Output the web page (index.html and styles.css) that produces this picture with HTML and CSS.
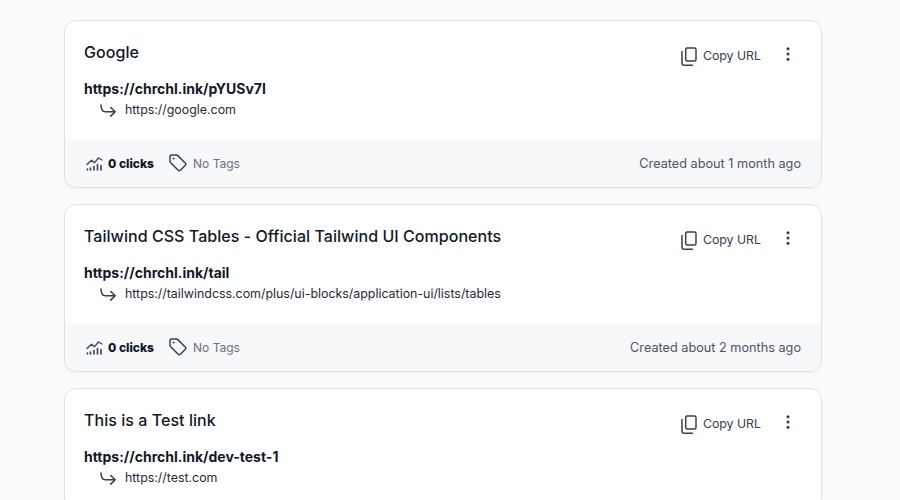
FILE: index.html
```html
<!DOCTYPE html>
<html lang="en">
<head>
  <meta charset="UTF-8" />
  <title>Links</title>
  <link rel="stylesheet" href="styles.css">
</head>
<body>
  <svg class="defs" width="0" height="0">
    <symbol id="copy" viewBox="0 0 16 19">
      <path d="M6.200 1h7.300A1.500 1.500 0 0 1 15 2.500v10a1.500 1.500 0 0 1-1.500 1.500H6.200a1.500 1.500 0 0 1-1.500-1.500v-10A1.500 1.500 0 0 1 6.200 1z" fill="none" stroke="currentColor" stroke-width="1.500"/>
      <path d="M1 4.500v11.700A2 2 0 0 0 3 18.200h8.500" fill="none" stroke="currentColor" stroke-width="1.500" stroke-linecap="round"/>
    </symbol>
    <symbol id="dots" viewBox="0 0 4 16">
      <circle cx="2" cy="2" r="1.800" fill="currentColor"/>
      <circle cx="2" cy="8" r="1.800" fill="currentColor"/>
      <circle cx="2" cy="14" r="1.800" fill="currentColor"/>
    </symbol>
    <symbol id="arrow" viewBox="0 0 16 13">
      <path d="M1 1c.2 4.500 1.500 6.800 4.500 6.800H15M10.800 3.500l4.300 4.300-4.300 4.300" fill="none" stroke="currentColor" stroke-width="1.600" stroke-linecap="round" stroke-linejoin="round"/>
    </symbol>
    <symbol id="chart" viewBox="0 0 17 15">
      <path d="M1 8.500l4.500-4.300 3 2.500L12.500 2l3.500 2" fill="none" stroke="currentColor" stroke-width="1.300" stroke-linecap="round" stroke-linejoin="round"/>
      <path d="M1.500 13v1M4.500 12v2M8 10.500V14M11.500 8.500V14M15 9.500V14" fill="none" stroke="currentColor" stroke-width="1.600" stroke-linecap="round"/>
    </symbol>
    <symbol id="tag" viewBox="0 0 18 18">
      <path d="M1 2.500A1.500 1.500 0 0 1 2.500 1h4.800c.6 0 1.100.2 1.500.6l7.600 7.600a1.500 1.500 0 0 1 0 2.100l-5 5a1.500 1.500 0 0 1-2.100 0L1.600 8.700A2 2 0 0 1 1 7.300z" fill="none" stroke="currentColor" stroke-width="1.500" stroke-linejoin="round"/>
      <circle cx="4.500" cy="4.500" r="1" fill="currentColor"/>
    </symbol>
  </svg>

  <div class="list">
    <div class="card">
      <div class="card-main">
        <div class="card-head">
          <h2>Google</h2>
          <div class="actions">
            <span class="copy"><svg class="ico-copy"><use href="#copy"/></svg>Copy URL</span>
            <svg class="ico-dots"><use href="#dots"/></svg>
          </div>
        </div>
        <div class="short">https://chrchl.ink/pYUSv7I</div>
        <div class="target"><svg class="ico-arrow"><use href="#arrow"/></svg>https://google.com</div>
      </div>
      <div class="card-foot">
        <span class="clicks"><svg class="ico-chart"><use href="#chart"/></svg>0 clicks</span>
        <span class="tags"><svg class="ico-tag"><use href="#tag"/></svg>No Tags</span>
        <span class="created">Created about 1 month ago</span>
      </div>
    </div>

    <div class="card">
      <div class="card-main">
        <div class="card-head">
          <h2>Tailwind CSS Tables - Official Tailwind UI Components</h2>
          <div class="actions">
            <span class="copy"><svg class="ico-copy"><use href="#copy"/></svg>Copy URL</span>
            <svg class="ico-dots"><use href="#dots"/></svg>
          </div>
        </div>
        <div class="short">https://chrchl.ink/tail</div>
        <div class="target"><svg class="ico-arrow"><use href="#arrow"/></svg>https://tailwindcss.com/plus/ui-blocks/application-ui/lists/tables</div>
      </div>
      <div class="card-foot">
        <span class="clicks"><svg class="ico-chart"><use href="#chart"/></svg>0 clicks</span>
        <span class="tags"><svg class="ico-tag"><use href="#tag"/></svg>No Tags</span>
        <span class="created">Created about 2 months ago</span>
      </div>
    </div>

    <div class="card">
      <div class="card-main">
        <div class="card-head">
          <h2>This is a Test link</h2>
          <div class="actions">
            <span class="copy"><svg class="ico-copy"><use href="#copy"/></svg>Copy URL</span>
            <svg class="ico-dots"><use href="#dots"/></svg>
          </div>
        </div>
        <div class="short">https://chrchl.ink/dev-test-1</div>
        <div class="target"><svg class="ico-arrow"><use href="#arrow"/></svg>https://test.com</div>
      </div>
    </div>
  </div>
</body>
</html>
```

FILE: styles.css
```css
* {
  margin: 0;
  padding: 0;
  box-sizing: border-box;
  font-family: Inter, 'Noto Sans', sans-serif;
}

html, body {
  height: 100%;
  overflow: hidden;
}

body {
  background: #fafafa;
  color: #111827;
}

.defs {
  display: block;
  height: 0;
}

.list {
  width: 758px;
  margin: 20px 0 0 64px;
  display: flex;
  flex-direction: column;
  gap: 16px;
}

.card {
  background: #fff;
  border: 1px solid #dfe1e5;
  border-radius: 12px;
  box-shadow: 0 1px 2px rgba(0, 0, 0, 0.05);
  overflow: hidden;
  flex-shrink: 0;
}

.card-main {
  height: 119px;
  padding: 20px 20px 0 20px;
}

.card-head {
  display: flex;
  justify-content: space-between;
  height: 38px;
}

h2 {
  font-size: 16px;
  line-height: 22px;
  font-weight: 550;
  letter-spacing: 0.05px;
  margin-left: -1px;
}

.actions {
  display: flex;
  align-items: flex-start;
  padding-top: 5px;
}

.copy {
  display: flex;
  align-items: center;
  font-size: 12.300px;
  line-height: 20px;
  color: #374151;
}

.ico-copy {
  width: 16px;
  height: 19px;
  margin-right: 6px;
  color: #374151;
}

.ico-dots {
  width: 4px;
  height: 14px;
  margin: 1px 11px 0 25px;
  color: #374151;
}

.short {
  font-size: 14px;
  line-height: 20px;
  font-weight: 700;
  margin-left: -1px;
}

.target {
  display: flex;
  align-items: center;
  font-size: 12.400px;
  line-height: 22px;
  padding-left: 15px;
  color: #1f2937;
}

.ico-arrow {
  width: 16px;
  height: 13px;
  margin-right: 9px;
  color: #374151;
}

.card-foot {
  height: 47px;
  background: #f7f8fa;
  display: flex;
  align-items: center;
  padding: 0 20px 1px 21px;
  font-size: 12.700px;
  color: #6b7280;
}

.clicks {
  display: flex;
  align-items: center;
  font-size: 12px;
  font-weight: 800;
  color: #111827;
}

.ico-chart {
  width: 17px;
  height: 15px;
  margin-right: 5px;
  color: #374151;
}

.tags {
  display: flex;
  align-items: center;
  margin-left: 15px;
  font-size: 12px;
}

.ico-tag {
  width: 18px;
  height: 18px;
  margin-right: 6px;
  color: #374151;
}

.created {
  margin-left: auto;
  color: #4b5563;
}
```
